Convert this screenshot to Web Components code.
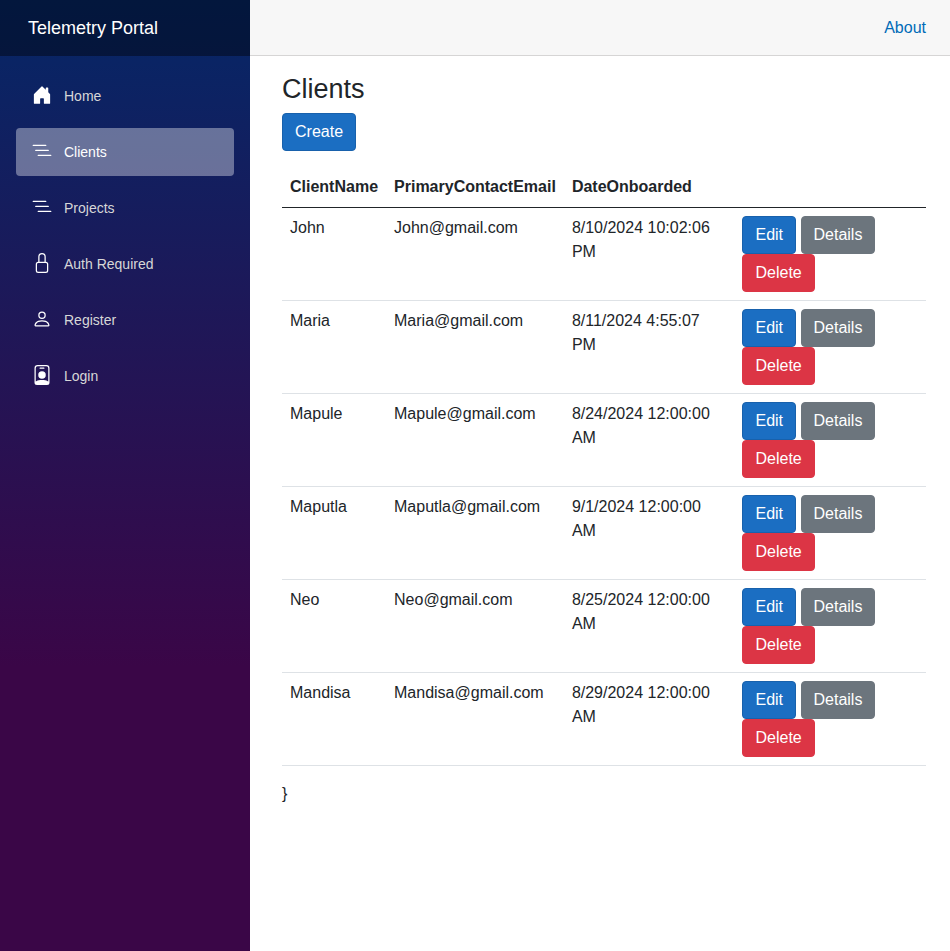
<!DOCTYPE html>
<html lang="en">
<head>
<meta charset="utf-8">
<meta name="viewport" content="width=device-width, initial-scale=1">
<title>Clients</title>
<style>
  body {
    margin: 0;
    background: #fff;
    color: #212529;
    font: 16px/24px "Liberation Sans", Arial, sans-serif;
  }
</style>
</head>
<body>
<portal-layout>
  <portal-sidebar slot="sidebar" brand="Telemetry Portal">
    <nav-item icon="house">Home</nav-item>
    <nav-item icon="list" active>Clients</nav-item>
    <nav-item icon="list">Projects</nav-item>
    <nav-item icon="lock">Auth Required</nav-item>
    <nav-item icon="person">Register</nav-item>
    <nav-item icon="badge">Login</nav-item>
  </portal-sidebar>
  <text-link slot="top">About</text-link>
  <clients-page></clients-page>
</portal-layout>

<script>
const component = (name, markup, setup) => {
  const template = document.createElement('template');
  template.innerHTML = markup;
  customElements.define(name, class extends HTMLElement {
    constructor() {
      super();
      this.attachShadow({ mode: 'open' }).append(template.content.cloneNode(true));
    }
    connectedCallback() {
      if (setup) setup(this, this.shadowRoot);
    }
  });
};

const icons = {
  house: '<path d="M6.5 14.5v-3.505c0-.245.25-.495.5-.495h2c.25 0 .5.25.5.5v3.5a.5.5 0 0 0 .5.5h4a.5.5 0 0 0 .5-.5v-7a.5.5 0 0 0-.146-.354L13 5.793V2.5a.5.5 0 0 0-.5-.5h-1a.5.5 0 0 0-.5.5v1.293L8.354 1.146a.5.5 0 0 0-.708 0l-6 6A.5.5 0 0 0 1.5 7.5v7a.5.5 0 0 0 .5.5h4a.5.5 0 0 0 .5-.5Z"/>',
  list: '<path fill-rule="evenodd" d="M4.5 11.5A.5.5 0 0 1 5 11h10a.5.5 0 0 1 0 1H5a.5.5 0 0 1-.5-.5zm-2-4A.5.5 0 0 1 3 7h10a.5.5 0 0 1 0 1H3a.5.5 0 0 1-.5-.5zm-2-4A.5.5 0 0 1 1 3h10a.5.5 0 0 1 0 1H1a.5.5 0 0 1-.5-.5z"/>',
  lock: '<path d="M8 1a2 2 0 0 1 2 2v4H6V3a2 2 0 0 1 2-2zm3 6V3a3 3 0 0 0-6 0v4a2 2 0 0 0-2 2v5a2 2 0 0 0 2 2h6a2 2 0 0 0 2-2V9a2 2 0 0 0-2-2zM5 8h6a1 1 0 0 1 1 1v5a1 1 0 0 1-1 1H5a1 1 0 0 1-1-1V9a1 1 0 0 1 1-1z"/>',
  person: '<path d="M8 8a3 3 0 1 0 0-6 3 3 0 0 0 0 6Zm2-3a2 2 0 1 1-4 0 2 2 0 0 1 4 0Zm4 8c0 1-1 1-1 1H3s-1 0-1-1 1-4 6-4 6 3 6 4Zm-1-.004c-.001-.246-.154-.986-.832-1.664C11.516 10.68 10.289 10 8 10c-2.29 0-3.516.68-4.168 1.332-.678.678-.83 1.418-.832 1.664h10Z"/>',
  badge: '<path d="M6.5 2a.5.5 0 0 0 0 1h3a.5.5 0 0 0 0-1h-3zM11 8a3 3 0 1 1-6 0 3 3 0 0 1 6 0z"/><path d="M4.5 0A2.5 2.5 0 0 0 2 2.5V14a2 2 0 0 0 2 2h8a2 2 0 0 0 2-2V2.5A2.5 2.5 0 0 0 11.5 0h-7zM3 2.5A1.5 1.5 0 0 1 4.5 1h7A1.5 1.5 0 0 1 13 2.5v10.795a4.2 4.2 0 0 0-.776-.492C11.392 12.387 10.063 12 8 12s-3.392.387-4.224.803a4.2 4.2 0 0 0-.776.492V2.5z"/>'
};

component('portal-layout', `
  <style>
    :host { display: flex; min-height: 100vh; }
    main { flex: 1; min-width: 0; }
    .top {
      box-sizing: border-box; height: 56px; padding: 0 24px;
      display: flex; align-items: center; justify-content: flex-end;
      background: #f7f7f7; border-bottom: 1px solid #d6d5d5;
    }
    article { padding: 17px 24px 0 32px; }
  </style>
  <slot name="sidebar"></slot>
  <main>
    <div class="top"><slot name="top"></slot></div>
    <article><slot></slot></article>
  </main>
`);

component('portal-sidebar', `
  <style>
    :host {
      display: block; flex: none; width: 250px;
      background: linear-gradient(180deg, #052767 0%, #3a0647 70%);
    }
    .brand {
      display: flex; align-items: center; height: 56px; padding: 0 28px;
      background: rgba(0, 0, 0, .4);
    }
    .brand a { color: #fff; font-size: 18px; text-decoration: none; }
    nav { display: flex; flex-direction: column; gap: 8px; padding: 16px; }
  </style>
  <div class="brand"><a href="#"></a></div>
  <nav><slot></slot></nav>
`, (host, root) => {
  root.querySelector('.brand a').textContent = host.getAttribute('brand');
});

component('nav-item', `
  <style>
    :host { display: block; }
    a {
      display: flex; align-items: center; gap: 12px; height: 48px; padding: 0 16px;
      border-radius: 4px; color: #d7d7d7; font-size: 14px; text-decoration: none;
    }
    :host([active]) a { background: rgba(255, 255, 255, .37); color: #fff; }
    svg { width: 20px; height: 20px; margin-bottom: 2px; fill: #fff; }
  </style>
  <a href="#"><svg viewBox="0 0 16 16" aria-hidden="true"></svg><span><slot></slot></span></a>
`, (host, root) => {
  root.querySelector('svg').innerHTML = icons[host.getAttribute('icon')];
  if (host.hasAttribute('active')) root.querySelector('a').setAttribute('aria-current', 'page');
});

component('text-link', `
  <style>
    :host { display: block; }
    a { color: #006bb7; text-decoration: none; }
  </style>
  <a href="#"><slot></slot></a>
`);

component('action-button', `
  <style>
    :host { display: inline-block; vertical-align: middle; }
    button {
      display: block; margin: 0; padding: 6px 12px;
      border: 1px solid #1861ac; border-radius: 4px;
      background: #1b6ec2; color: #fff; font: inherit; cursor: pointer;
    }
    :host([kind="secondary"]) button { background: #6c757d; border-color: #6c757d; }
    :host([kind="danger"]) button { background: #dc3545; border-color: #dc3545; }
  </style>
  <button type="button"><slot></slot></button>
`);

component('clients-table', `
  <style>
    :host { display: block; }
    table { width: 100%; border-collapse: collapse; }
    th, td { padding: 8px; text-align: left; vertical-align: top; border-bottom: 1px solid #dee2e6; }
    thead th, thead td { border-bottom-color: #212529; }
  </style>
  <table>
    <thead><tr><th scope="col">ClientName</th><th scope="col">PrimaryContactEmail</th><th scope="col">DateOnboarded</th><td></td></tr></thead>
    <tbody></tbody>
  </table>
`, (host, root) => {
  const clients = [
    ['John', 'John@gmail.com', '8/10/2024 10:02:06 PM'],
    ['Maria', 'Maria@gmail.com', '8/11/2024 4:55:07 PM'],
    ['Mapule', 'Mapule@gmail.com', '8/24/2024 12:00:00 AM'],
    ['Maputla', 'Maputla@gmail.com', '9/1/2024 12:00:00 AM'],
    ['Neo', 'Neo@gmail.com', '8/25/2024 12:00:00 AM'],
    ['Mandisa', 'Mandisa@gmail.com', '8/29/2024 12:00:00 AM']
  ];
  root.querySelector('tbody').innerHTML = clients.map(row => `
    <tr>${row.map(cell => `<td>${cell}</td>`).join('')}
      <td>
        <action-button>Edit</action-button>
        <action-button kind="secondary">Details</action-button>
        <action-button kind="danger">Delete</action-button>
      </td>
    </tr>`).join('');
});

component('clients-page', `
  <style>
    :host { display: block; }
    h1 { margin: 0 0 8px; font-size: 27px; line-height: 32px; font-weight: 500; }
    .create { display: flex; margin-bottom: 16px; }
    clients-table { margin-bottom: 16px; }
  </style>
  <h1>Clients</h1>
  <div class="create"><action-button>Create</action-button></div>
  <clients-table></clients-table>
  <div>}</div>
`);
</script>
</body>
</html>
